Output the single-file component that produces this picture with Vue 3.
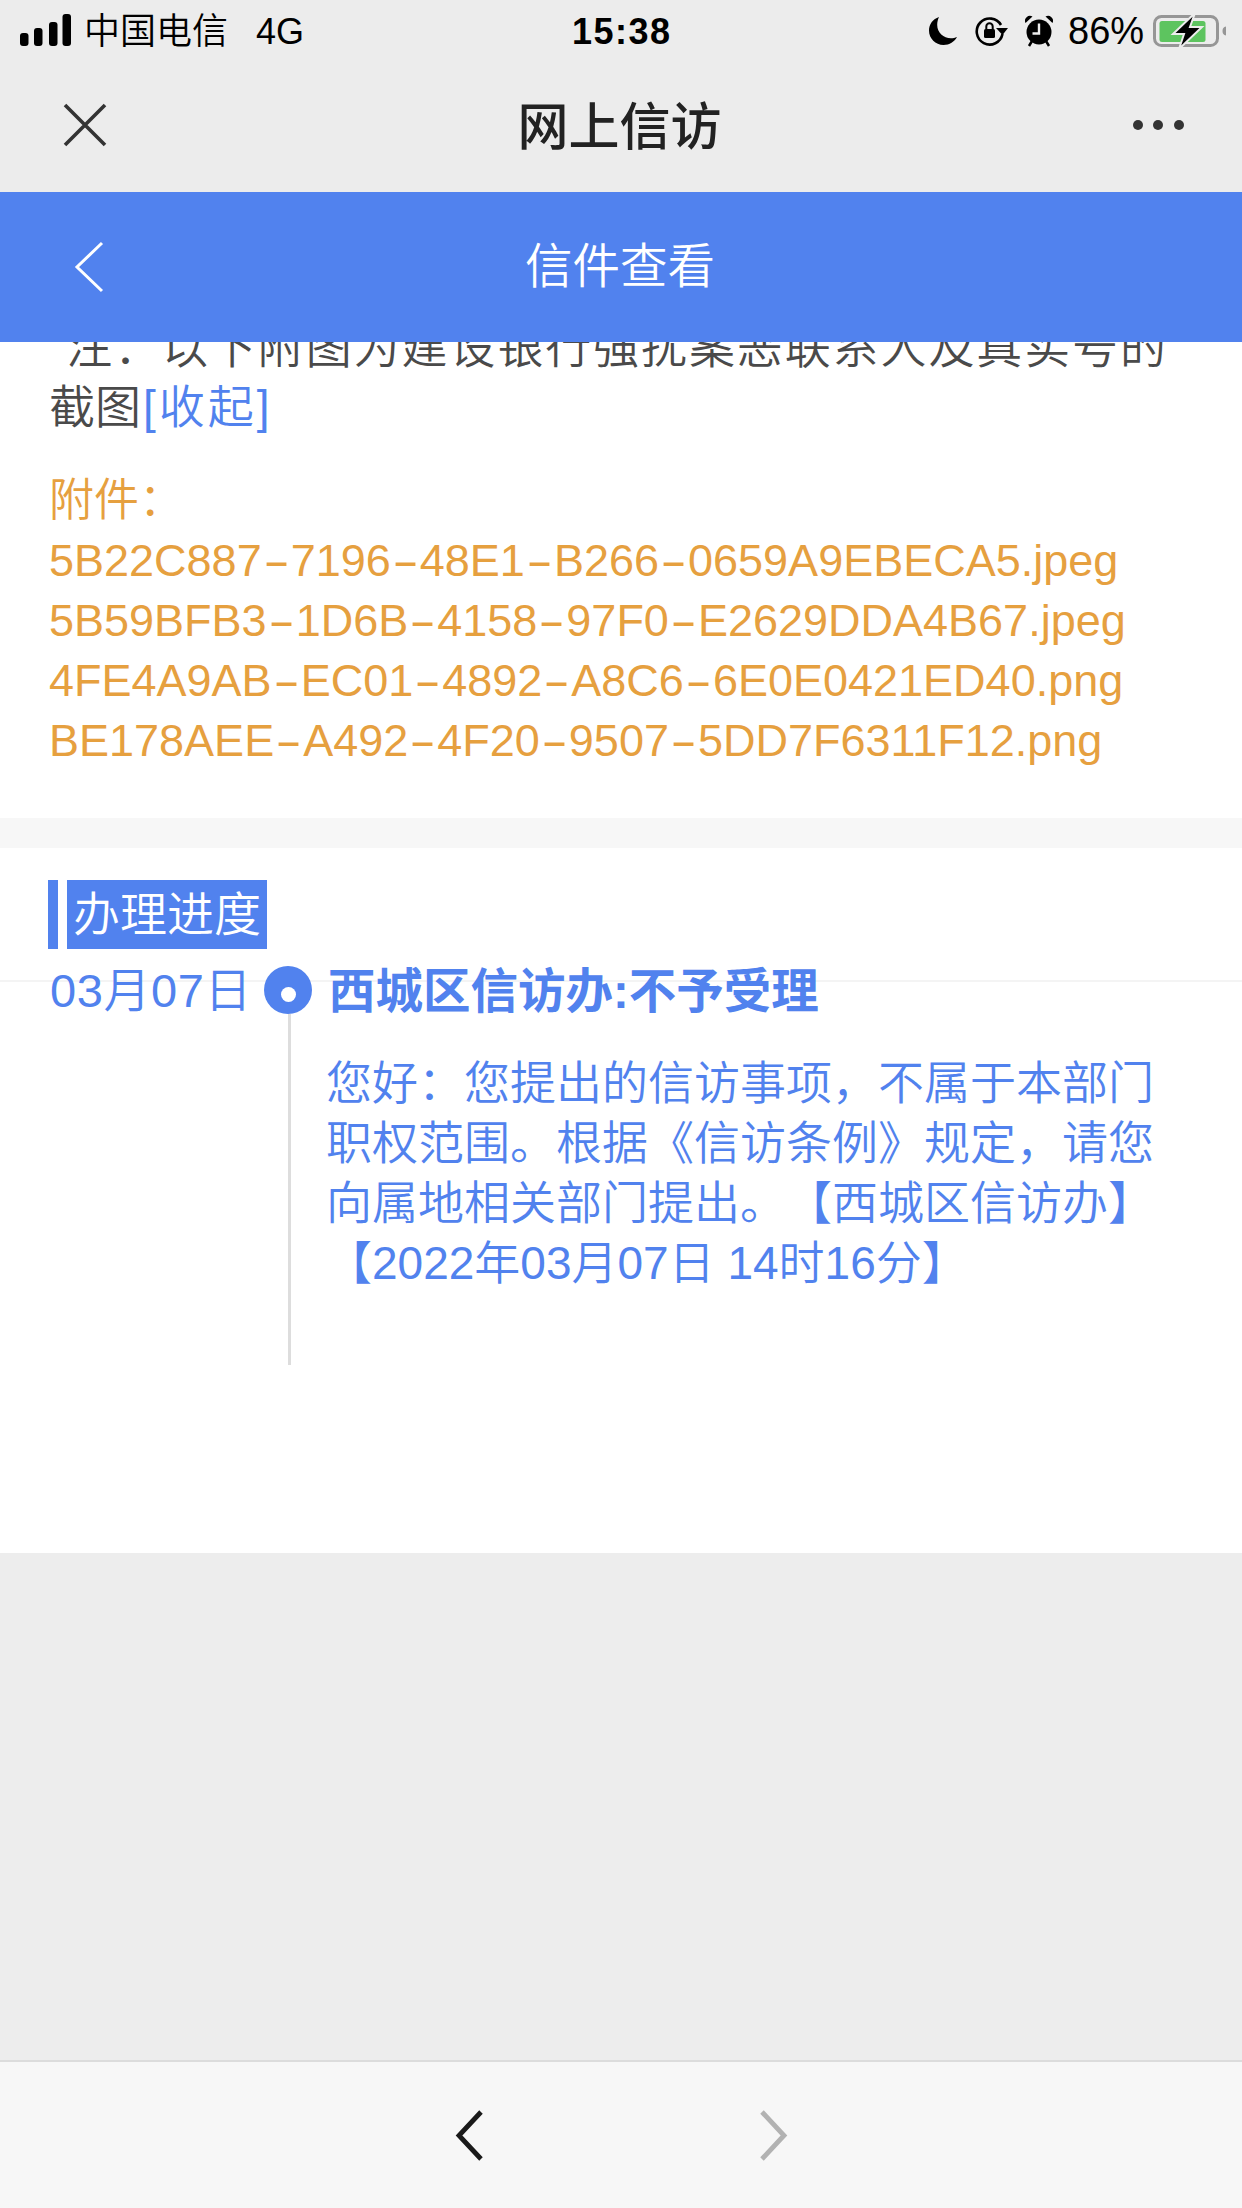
<script setup>
const files = [
  '5B22C887-7196-48E1-B266-0659A9EBECA5.jpeg',
  '5B59BFB3-1D6B-4158-97F0-E2629DDA4B67.jpeg',
  '4FE4A9AB-EC01-4892-A8C6-6E0E0421ED40.png',
  'BE178AEE-A492-4F20-9507-5DD7F6311F12.png'
].map((name) => name.split(/(-)/))
const bars = [
  { x: 20, y: 33, h: 13 },
  { x: 34, y: 28, h: 18 },
  { x: 49, y: 22, h: 24 },
  { x: 62.500, y: 14, h: 32 }
]
</script>

<template>
  <div class="page">
    <div class="chrome">
      <div class="status">
        <div class="status-left">
          <svg class="signal" width="51" height="32" viewBox="20 14 51 32">
            <rect v-for="b in bars" :key="b.x" :x="b.x" :y="b.y" width="8.500" :height="b.h" rx="3" fill="#000" />
          </svg>
          <span class="carrier">中国电信</span>
          <span class="net">4G</span>
        </div>
        <div class="clock">15:38</div>
        <div class="status-right">
          <svg class="moon" width="30" height="28" viewBox="0 0 30 28">
            <path d="M11 0C5 2 1 7 1 13.500C1 21.500 7.500 28 15.500 28C21.500 28 26.500 24.500 29 20C27 21 25 21.300 23 21.300C15.500 21.300 9.200 15.500 9.200 8C9.200 5 9.900 2.300 11 0Z" fill="#000" />
          </svg>
          <svg class="lock" width="34" height="30" viewBox="0 0 34 30">
            <path d="M26 9A13 13 0 1 0 27.500 18" fill="none" stroke="#000" stroke-width="2.600" />
            <path d="M21 12H33L27.500 19Z" fill="#000" />
            <rect x="9" y="13" width="11" height="9" rx="1.500" fill="#000" />
            <path d="M11.300 13V10.500A3.200 3.200 0 0 1 17.700 10.500V13" fill="none" stroke="#000" stroke-width="2" />
          </svg>
          <svg class="alarm" width="28" height="32" viewBox="0 0 28 32">
            <circle cx="14" cy="17" r="12.500" fill="#000" />
            <path d="M0.500 8A5 5 0 0 1 7.500 1.500ZM27.500 8A5 5 0 0 0 20.500 1.500Z" fill="#000" />
            <path d="M4 31L7 26M24 31L21 26" stroke="#000" stroke-width="2.500" />
            <path d="M14 8.500V18.500H7.500" fill="none" stroke="#ececec" stroke-width="2.400" />
          </svg>
          <span class="percent">86%</span>
          <svg class="battery" width="74" height="36" viewBox="0 0 74 36">
            <rect x="1.500" y="3.500" width="63" height="29" rx="7" fill="none" stroke="#969696" stroke-width="3" />
            <rect x="6.500" y="8" width="46" height="21" rx="2.500" fill="#5dc45f" />
            <path d="M73 13.500V22.500C70.500 22 69.500 20.500 69.500 18C69.500 15.500 70.500 14 73 13.500Z" fill="#969696" />
            <path d="M42 0L20 21H31L26 36L49 14H37Z" fill="#000" stroke="#ececec" stroke-width="2" />
          </svg>
        </div>
      </div>
      <div class="titlebar">
        <svg width="44" height="44" viewBox="0 0 44 44">
          <path d="M2 2L42 42M42 2L2 42" stroke="#333" stroke-width="3.600" />
        </svg>
        <span class="title">网上信访</span>
        <svg class="more" width="52" height="12" viewBox="0 0 52 12">
          <circle cx="6" cy="6" r="5" fill="#333" />
          <circle cx="26" cy="6" r="5" fill="#333" />
          <circle cx="47" cy="6" r="5" fill="#333" />
        </svg>
      </div>
    </div>

    <header class="header">
      <svg class="back" width="30" height="52" viewBox="0 0 30 52">
        <path d="M28 2L3 26L28 50" fill="none" stroke="#fff" stroke-width="3" />
      </svg>
      <span class="header-title">信件查看</span>
    </header>

    <section class="letter">
      <p class="note">
        <span class="note-first">“注：以下附图为建设银行强扰案恶联系人及真实号的</span><br />截图<a class="fold">[收起]</a>
      </p>
      <div class="files">
        <div>附件：</div>
        <div v-for="parts in files" :key="parts.join('')">
          <template v-for="(part, i) in parts" :key="i">
            <span v-if="part === '-'" class="hyphen">-</span>
            <template v-else>{{ part }}</template>
          </template>
        </div>
      </div>
    </section>

    <section class="progress">
      <div class="progress-head">
        <span class="mark"></span>
        <h2 class="progress-title">办理进度</h2>
      </div>
      <div class="row">
        <div class="date">03月07日</div>
        <div class="axis">
          <span class="dot"><i></i></span>
          <span class="axis-line"></span>
        </div>
        <div class="entry">
          <div class="entry-title">西城区信访办:不予受理</div>
          <p class="entry-text">您好：您提出的信访事项，不属于本部门职权范围。根据《信访条例》规定，请您向属地相关部门提出。【西城区信访办】【2022年03月07日 14时16分】</p>
        </div>
      </div>
    </section>

    <div class="filler"></div>

    <footer class="toolbar">
      <svg width="30" height="53" viewBox="0 0 30 53">
        <path d="M27 3L5 26.500L27 50" fill="none" stroke="#1a1a1a" stroke-width="4.800" />
      </svg>
      <svg width="30" height="53" viewBox="0 0 30 53">
        <path d="M3 3L25 26.500L3 50" fill="none" stroke="#b2b2b2" stroke-width="4.800" />
      </svg>
    </footer>
  </div>
</template>

<style scoped>
.page {
  width: 1242px;
  height: 2208px;
  display: flex;
  flex-direction: column;
  overflow: hidden;
  background: #ededed;
  font-family: "Liberation Sans", "Noto Sans CJK SC", sans-serif;
  font-weight: 350;
  text-spacing-trim: space-all;
}
.chrome {
  height: 192px;
  flex: none;
  background: #ececec;
}
.status {
  height: 64px;
  display: flex;
  align-items: center;
  justify-content: space-between;
  color: #000;
}
.status-left {
  display: flex;
  align-items: center;
  padding-left: 20px;
  width: 400px;
}
.signal { margin-top: -4px; }
.carrier {
  margin-left: 13px;
  font-size: 36px;
  line-height: 64px;
}
.net {
  margin-left: 28px;
  font-size: 36px;
  line-height: 64px;
}
.clock {
  font-size: 36px;
  font-weight: 700;
  letter-spacing: 1.500px;
  line-height: 64px;
  margin-top: -1px;
  width: 100px;
  margin-right: 104px;
}
.status-right {
  display: flex;
  align-items: center;
  width: 314px;
  margin-top: -3px;
}
.moon { margin-right: 17px; }
.lock { margin-right: 16px; }
.alarm { margin-right: 15px; }
.percent {
  font-size: 38px;
  line-height: 64px;
  width: 85px;
}
.titlebar {
  height: 128px;
  box-sizing: border-box;
  display: flex;
  align-items: center;
  justify-content: space-between;
  padding: 0 58px 6px 63px;
}
.title {
  font-size: 51px;
  font-weight: 500;
  color: #222;
  margin-top: -5px;
}
.header {
  height: 150px;
  flex: none;
  background: #5182ee;
  display: flex;
  align-items: center;
  padding-left: 74px;
  color: #fff;
}
.header-title {
  margin-left: 421px;
  font-size: 47.500px;
  line-height: 150px;
}
.letter {
  height: 476px;
  flex: none;
  background: #fff;
  overflow: hidden;
  padding: 0 49px;
  box-sizing: border-box;
}
.note {
  margin: -25px 0 34px;
  font-size: 46px;
  line-height: 60px;
  color: #4a4a4a;
  white-space: nowrap;
}
.note-first { letter-spacing: 1.900px; }
.fold {
  color: #5182ee;
  letter-spacing: 3px;
  margin-left: 2px;
}
.files {
  font-size: 45px;
  line-height: 60px;
  color: #e6a03f;
  white-space: nowrap;
}
.hyphen {
  display: inline-block;
  margin: 0 7px;
  transform: scaleX(1.800);
}
.progress {
  height: 735px;
  flex: none;
  border-top: 30px solid #f7f7f7;
  background: #fff;
  box-sizing: border-box;
}
.progress-head {
  height: 134px;
  box-sizing: border-box;
  padding: 32px 0 0 48px;
  display: flex;
  align-items: flex-start;
  border-bottom: 2px solid #f4f4f4;
  margin-bottom: -16px;
}
.mark {
  width: 10px;
  height: 69px;
  background: #5182ee;
  margin-right: 9px;
}
.progress-title {
  margin: 0;
  height: 69px;
  padding: 0 6px;
  background: #5182ee;
  color: #fff;
  font-size: 47px;
  font-weight: 350;
  line-height: 69px;
}
.row {
  display: flex;
  padding-left: 50px;
  height: 399px;
  color: #5182ee;
}
.date {
  width: 214px;
  font-size: 47px;
  line-height: 50px;
  letter-spacing: 0.600px;
}
.axis {
  width: 48px;
  display: flex;
  flex-direction: column;
  align-items: center;
}
.dot {
  width: 48px;
  height: 48px;
  flex: none;
  border-radius: 50%;
  background: #5182ee;
  display: flex;
  align-items: center;
  justify-content: center;
}
.dot i {
  width: 15px;
  height: 15px;
  border-radius: 50%;
  background: #fff;
  margin: 9px 0 0 1px;
}
.axis-line {
  flex: 1;
  width: 3px;
  margin-left: 3px;
  background: #ddd;
}
.entry {
  margin-left: 16px;
  width: 832px;
}
.entry-title {
  font-size: 47.500px;
  font-weight: 700;
  line-height: 52px;
}
.entry-text {
  margin: 35px 0 0 -2px;
  width: 834px;
  font-size: 46px;
  line-height: 60px;
}
.filler { flex: 1; }
.toolbar {
  height: 148px;
  flex: none;
  box-sizing: border-box;
  background: #f7f7f7;
  border-top: 2px solid #dcdcdc;
  display: flex;
  align-items: center;
  justify-content: center;
  gap: 275px;
}
</style>
